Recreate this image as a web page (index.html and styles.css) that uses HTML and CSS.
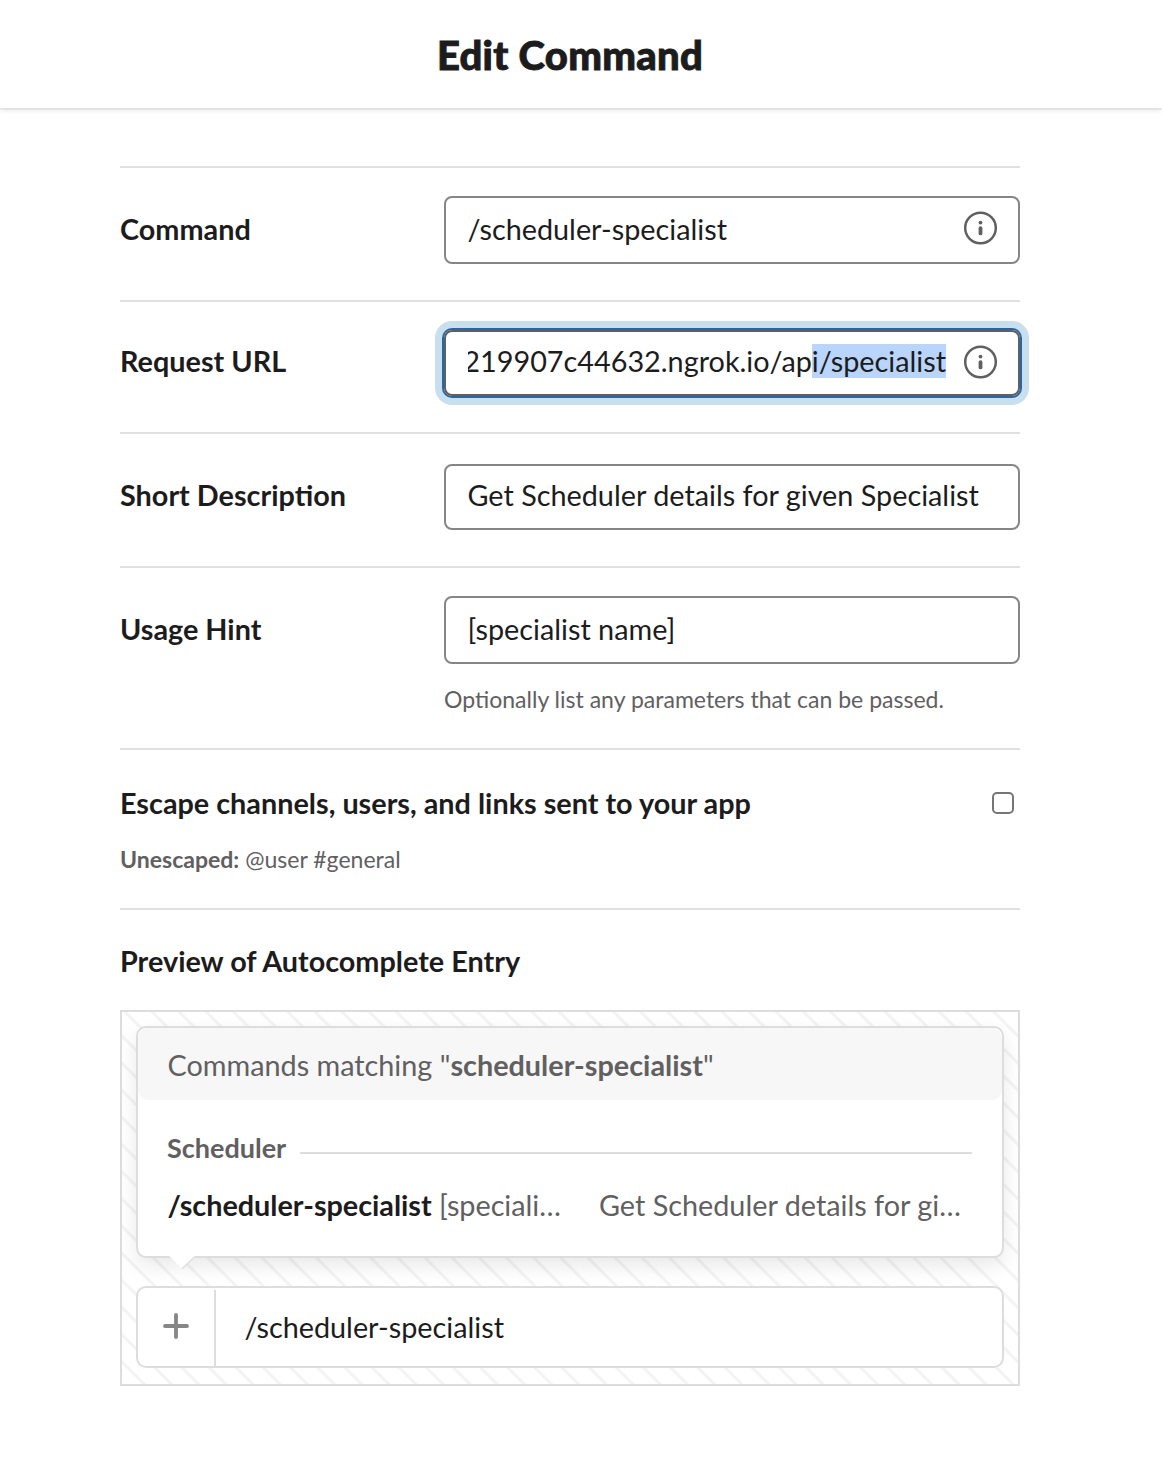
FILE: index.html
```html
<!DOCTYPE html>
<html lang="en">
<head>
<meta charset="utf-8">
<title>Edit Command</title>
<link rel="stylesheet" href="styles.css">
</head>
<body>
<header class="header"><h1 class="title">Edit Command</h1></header>
<main class="form">
  <section class="row row-command">
    <div class="label">Command</div>
    <div class="field"><span class="value">/scheduler-specialist</span>
      <svg class="info" viewBox="0 0 34 34"><circle cx="17.5" cy="17" r="15.3"/><circle class="dot" cx="17.5" cy="11.6" r="1.9"/><path d="M17.5 17.2v5.2"/></svg>
    </div>
  </section>
  <section class="row row-url">
    <div class="label">Request URL</div>
    <div class="field focused"><span class="value scrolled">219907c44632.ngrok.io/ap<mark>i/specialist</mark></span>
      <svg class="info" viewBox="0 0 34 34"><circle cx="17.5" cy="17" r="15.3"/><circle class="dot" cx="17.5" cy="11.6" r="1.9"/><path d="M17.5 17.2v5.2"/></svg>
    </div>
  </section>
  <section class="row row-desc">
    <div class="label">Short Description</div>
    <div class="field"><span class="value">Get Scheduler details for given Specialist</span></div>
  </section>
  <section class="row row-hint">
    <div class="label">Usage Hint</div>
    <div class="field-group">
      <div class="field"><span class="value">[specialist name]</span></div>
      <p class="note">Optionally list any parameters that can be passed.</p>
    </div>
  </section>
  <section class="row row-escape">
    <div>
      <div class="label">Escape channels, users, and links sent to your app</div>
      <p class="note"><b>Unescaped:</b> @user #general</p>
    </div>
    <span class="checkbox"></span>
  </section>
  <section class="preview-section">
    <h2 class="label">Preview of Autocomplete Entry</h2>
    <div class="preview">
      <div class="menu">
        <div class="menu-head">Commands matching "<b>scheduler-specialist</b>"</div>
        <div class="group"><b>Scheduler</b><span class="rule"></span></div>
        <div class="entry">
          <span class="entry-name"><b>/scheduler-specialist</b> [speciali…</span>
          <span>Get Scheduler details for gi…</span>
        </div>
        <svg class="arrow" viewBox="0 0 28 14"><path class="fill" d="M1 0L14 12.5 27 0z"/><path class="edge" d="M14 12.7L26.5 1"/></svg>
      </div>
      <div class="composer">
        <div class="plus"><svg viewBox="0 0 26 26"><path d="M13 2v22M2 13h22"/></svg></div>
        <span class="typed">/scheduler-specialist</span>
      </div>
    </div>
  </section>
</main>
</body>
</html>
```
FILE: styles.css
```css
* { box-sizing: border-box; }
body {
  margin: 0;
  min-height: 1462px;
  background: #fff;
  color: #1d1c1d;
  font: 28.8px/40px Lato, sans-serif;
}
h1, h2, p { margin: 0; }
.header {
  height: 108px;
  padding: 30px 22px 0 0;
  text-align: center;
  box-shadow: 0 2px 0 rgba(0, 0, 0, .05), 0 2px 6px rgba(0, 0, 0, .1);
}
.title { font-size: 40px; line-height: 50px; font-weight: 900; letter-spacing: .3px; -webkit-text-stroke: .9px #1d1c1d; }
.form { width: 900px; margin: 58px 0 0 120px; }
.row { display: flex; justify-content: space-between; border-top: 2px solid #e0e0e0; }
.label { font-size: 28.8px; line-height: 40px; font-weight: 700; white-space: nowrap; }
.row > .label { margin-top: 11px; }
.row-command { height: 134px; padding-top: 28px; }
.row-command .field { height: 68px; }
.row-command > .label { margin-top: 13px; }
.row-command .info { margin-top: -4px; }
.row-url { height: 132px; padding-top: 28px; }
.row-desc { height: 134px; padding-top: 30px; }
.row-hint { height: 182px; padding-top: 28px; }
.row-hint .field { height: 68px; }
.row-hint > .label { margin-top: 13px; }
.row-escape { height: 160px; padding-top: 33px; }
.field {
  display: flex;
  align-items: center;
  justify-content: space-between;
  width: 576px;
  height: 66px;
  padding: 0 21px 0 21.5px;
  border: 2px solid #868686;
  border-radius: 8px;
  white-space: nowrap;
}
.focused { padding-left: 22px; border-color: #616061; box-shadow: 0 0 0 2px #2b66a3, 0 0 0 9px #c7dfee; }
.focused .info { margin-top: -2px; }
.value { display: block; margin-top: -2px; }
.row-url .value, .row-desc .value { margin-top: -4px; }
.scrolled { display: flex; justify-content: flex-end; width: 478px; overflow: hidden; }
mark { height: 34px; margin-top: 3px; line-height: 34px; background: #b9d5fb; color: inherit; }
.info { flex: none; width: 34px; height: 34px; fill: none; stroke: #616061; stroke-width: 2.5; }
.info .dot { fill: #616061; stroke: none; }
.info path { stroke-width: 3.8; stroke-linecap: round; }
.note { font-size: 23.04px; line-height: 30px; color: #616061; white-space: nowrap; }
.field-group .note { margin-top: 20px; }
.row-escape .note { margin-top: 21px; }
.checkbox { width: 22px; height: 22px; margin: 9px 6px 0 0; border: 2px solid #767676; border-radius: 5px; }
.preview-section { border-top: 2px solid #e0e0e0; padding-top: 31px; }
.preview {
  height: 376px;
  margin-top: 29px;
  padding: 14px;
  border: 2px solid #ddd;
  background: repeating-linear-gradient(45deg, #fff 0, #fff 13.3px, #f3f3f3 15px, #f3f3f3 16.2px, #fff 17.9px, #fff 19.2px);
}
.menu {
  position: relative;
  height: 232px;
  border: 2px solid #ddd;
  border-radius: 10px;
  background: #fff;
  color: #616061;
  box-shadow: 0 8px 20px rgba(0, 0, 0, .09);
}
.menu-head { height: 72px; padding: 17px 0 0 29.5px; border-radius: 10px; background: #f7f7f7; }
.group { display: flex; align-items: center; gap: 14px; margin: 28px 30px 0 29px; font-size: 27px; line-height: 40px; }
.rule { flex: 1; height: 2px; margin-top: 10px; background: #ddd; }
.entry { display: flex; margin: 17px 0 0 29.5px; white-space: nowrap; }
.entry-name { width: 431.5px; letter-spacing: -.03px; }
.entry b { color: #1d1c1d; }
.arrow { position: absolute; left: 30px; bottom: -14px; width: 28px; height: 14px; }
.arrow .fill { fill: #fff; }
.arrow .edge { fill: none; stroke: #ddd; stroke-width: 1.4; }
.composer { display: flex; align-items: center; height: 82px; margin-top: 28px; border: 2px solid #ddd; border-radius: 10px; background: #fff; }
.plus { display: flex; align-items: center; justify-content: center; align-self: flex-end; width: 78px; height: 76px; border-right: 2px solid #ddd; }
.plus svg { width: 26px; height: 26px; margin-top: -4px; fill: none; stroke: #868686; stroke-width: 3.8; stroke-linecap: round; }
.typed { padding-left: 28.5px; }
```
